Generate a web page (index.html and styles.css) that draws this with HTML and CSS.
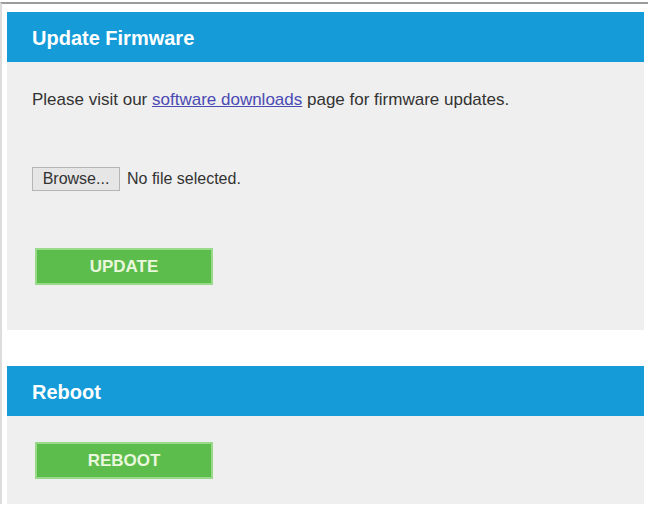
FILE: index.html
```html
<!DOCTYPE html>
<html lang="en">
<head>
    <meta charset="UTF-8">
    <meta name="viewport" content="width=device-width, initial-scale=1.0">
    <title>Firmware</title>
    <link rel="stylesheet" href="styles.css">
</head>
<body>
    <div class="frame">
        <div class="panel">
            <div class="panel-head">Update Firmware</div>
            <div class="panel-body firmware-body">
                <p class="note">Please visit our <a href="#">software downloads</a> page for firmware updates.</p>
                <div class="file-row">
                    <button class="browse-btn">Browse...</button>
                    <span class="file-name">No file selected.</span>
                </div>
                <button class="action-btn">UPDATE</button>
            </div>
        </div>

        <div class="panel">
            <div class="panel-head">Reboot</div>
            <div class="panel-body reboot-body">
                <button class="action-btn">REBOOT</button>
            </div>
        </div>
    </div>
</body>
</html>
```

FILE: styles.css
```css
* {
    box-sizing: border-box;
    margin: 0;
    padding: 0;
}

body {
    background: #fff;
    font-family: 'Liberation Sans', Arial, sans-serif;
    color: #333;
}

.frame {
    margin-top: 2px;
    border-top: 2px solid #9c9c9c;
    border-left: 2px solid #dcdcdc;
    padding: 8px 4px 0 5px;
    display: flex;
    flex-direction: column;
    gap: 36px;
}

.panel {
    background: #efefef;
}

.panel-head {
    background: #149bd8;
    color: #fff;
    font-size: 20px;
    font-weight: 700;
    height: 50px;
    line-height: 52px;
    padding-left: 25px;
}

.panel-body {
    padding: 0 25px 0 25px;
}

.firmware-body {
    padding-top: 29px;
    padding-bottom: 45px;
}

.reboot-body {
    padding-top: 26px;
    padding-bottom: 25px;
}

.note {
    font-size: 17px;
    line-height: 18px;
}

.note a {
    color: #4a4ab4;
}

.file-row {
    display: flex;
    align-items: center;
    gap: 7px;
    margin-top: 58px;
}

.browse-btn {
    font-family: 'Liberation Sans', Arial, sans-serif;
    font-size: 16px;
    color: #333;
    background: #e6e6e6;
    border: 1px solid #b5b5b5;
    height: 24px;
    width: 88px;
}

.file-name {
    font-size: 16px;
    color: #333;
}

.action-btn {
    display: block;
    margin-left: 3px;
    width: 178px;
    height: 37px;
    background: #5cbd4d;
    border: 2px solid #98d98a;
    color: #eaf7dc;
    font-family: 'Liberation Sans', Arial, sans-serif;
    font-size: 17px;
    font-weight: 700;
    cursor: pointer;
}

.firmware-body .action-btn {
    margin-top: 57px;
}
```
